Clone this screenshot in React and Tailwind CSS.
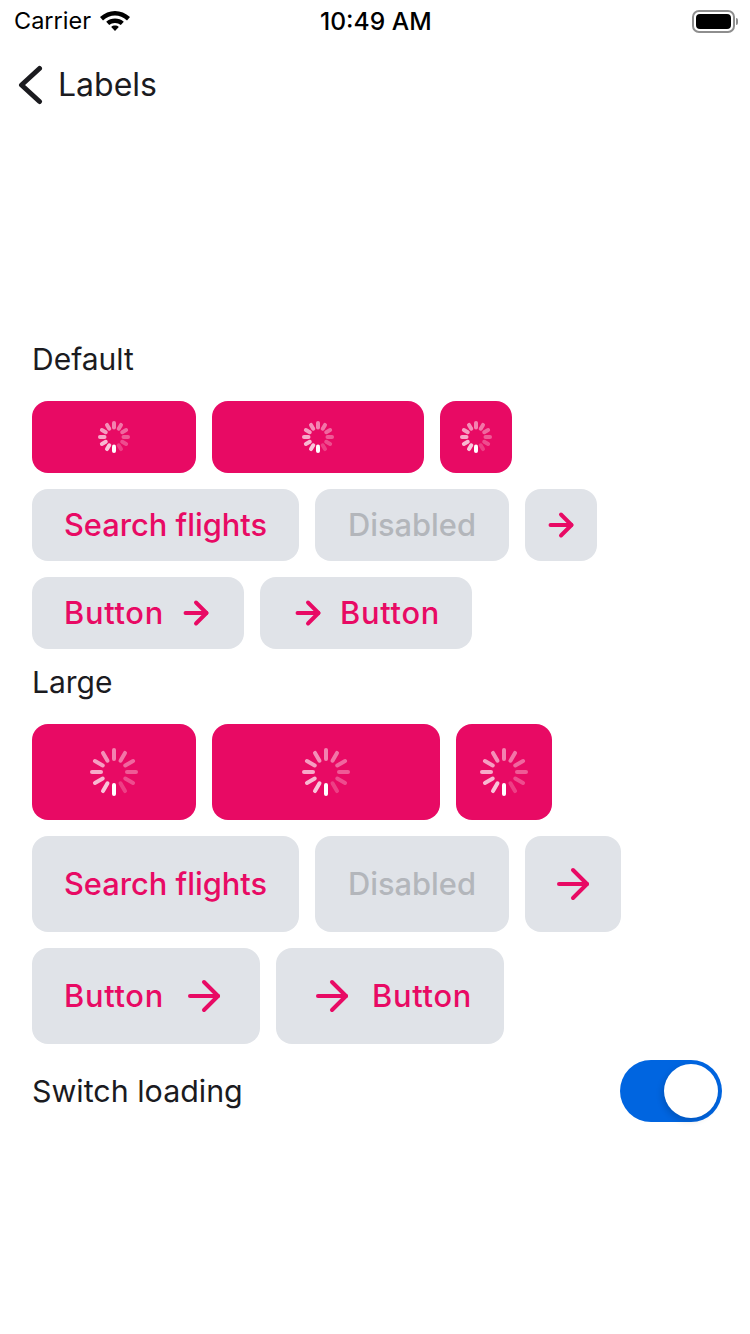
import React from 'react';

const pink = 'text-[#e80a64]';
const font = { fontFamily: 'Inter, "Liberation Sans", sans-serif' };

// 12 ticks, white one at the bottom, fading out going round
const Spinner = ({ size, len, width }) => {
  const ticks = Array.from({ length: 12 }, (_, i) => i);
  const c = size / 2;
  return (
    <svg width={size} height={size} viewBox={`0 0 ${size} ${size}`} className="block">
      {ticks.map(i => (
        <line
          key={i}
          x1={c}
          y1={size - 2}
          x2={c}
          y2={size - len + 2}
          stroke="white"
          strokeWidth={width}
          strokeLinecap="round"
          opacity={i === 0 ? 1 : 0.82 - i * 0.055}
          transform={`rotate(${i * 30} ${c} ${c})`}
        />
      ))}
    </svg>
  );
};

const Arrow = ({ size }) => (
  <svg width={size} height={size} viewBox="0 0 24 24" fill="none" stroke="#e80a64" strokeWidth={size === 36 ? 2.6 : 2} strokeLinecap="round" strokeLinejoin="round" className="block shrink-0">
    <path d="M5 12h14" />
    <path d="M12 5l7 7-7 7" />
  </svg>
);

const LoadingButton = ({ className, size, len, width }) => (
  <div className={`flex items-center justify-center rounded-2xl bg-[#e80a64] ${className}`}>
    <Spinner size={size} len={len} width={width} />
  </div>
);

const GrayButton = ({ className, children }) => (
  <div className={`flex items-center rounded-2xl bg-[#e0e3e8] text-[30.8px] font-medium leading-none ${className}`}>
    {children}
  </div>
);

const Label = () => <span className="tracking-[0.7px]">Button</span>;

const Row = ({ children }) => <div className="flex gap-4 mb-4">{children}</div>;

const Heading = ({ children }) => (
  <div className="h-[34px] mb-[25px] pt-[1px] flex items-center text-[30px] text-[#1b1b1f]">{children}</div>
);

export default function App() {
  return (
    <div className="w-[750px] h-[1334px] bg-white overflow-hidden" style={font}>
      <div className="h-10 relative flex items-center justify-between pl-[14px] pr-[12px] pt-[2px]">
        <div className="flex items-center gap-[9px]">
          <span className="text-[23.5px] text-black">Carrier</span>
          <svg width="30" height="22" viewBox="0 0 30 22" className="block">
            <path d="M15 1C9.500 1 4.500 3 0 7l3 3.400C6.700 7 10.700 5.500 15 5.500s8.300 1.500 12 4.900L30 7C25.500 3 20.500 1 15 1z" fill="black" />
            <path d="M15 8.500c-3.300 0-6.300 1.100-8.800 3.300l3 3.300c1.600-1.400 3.600-2.200 5.800-2.200s4.200.8 5.800 2.200l3-3.300c-2.500-2.200-5.500-3.300-8.800-3.300z" fill="black" />
            <path d="M15 15.500c-1.500 0-2.800.5-3.800 1.400L15 21l3.800-4.100c-1-.9-2.300-1.400-3.800-1.400z" fill="black" />
          </svg>
        </div>
        <span className="absolute left-[320px] text-[24.6px] font-medium text-black">10:49 AM</span>
        <div className="flex items-center gap-[1px]">
          <div className="w-[43px] h-[23px] rounded-[7px] border-2 border-[#8e8e8e] p-[2px]">
            <div className="w-full h-full rounded-[4px] bg-black" />
          </div>
          <div className="w-[2px] h-[7px] rounded-r bg-[#8e8e8e]" />
        </div>
      </div>

      <div className="h-[88px] flex items-center pl-[15px] pt-[1px]">
        <svg width="30" height="40" viewBox="0 0 30 40" fill="none" stroke="#1b1b1f" strokeWidth="5" strokeLinecap="round" strokeLinejoin="round" className="block">
          <path d="M24.500 3.500L6.500 20l18 16.500" />
        </svg>
        <span className="ml-[13px] text-[32px] text-[#1b1b1f]">Labels</span>
      </div>

      <div className="pt-[214px] pl-8 pr-7">
        <Heading>Default</Heading>
        <Row>
          <LoadingButton className="w-[164px] h-[72px]" size={32} len={8.500} width={4} />
          <LoadingButton className="w-[212px] h-[72px]" size={32} len={8.500} width={4} />
          <LoadingButton className="w-[72px] h-[72px]" size={32} len={8.500} width={4} />
        </Row>
        <Row>
          <GrayButton className={`w-[267px] h-[72px] justify-center ${pink}`}>Search flights</GrayButton>
          <GrayButton className="w-[194px] h-[72px] justify-center text-[#b3b6bb]">Disabled</GrayButton>
          <GrayButton className="h-[72px] w-[72px] justify-center"><Arrow size={36} /></GrayButton>
        </Row>
        <Row>
          <GrayButton className={`w-[212px] h-[72px] pl-8 pr-[30px] justify-between ${pink}`}><Label /><Arrow size={36} /></GrayButton>
          <GrayButton className={`w-[212px] h-[72px] pr-8 pl-[30px] justify-between ${pink}`}><Arrow size={36} /><Label /></GrayButton>
        </Row>

        <Heading>Large</Heading>
        <Row>
          <LoadingButton className="w-[164px] h-[96px]" size={48} len={13} width={4} />
          <LoadingButton className="w-[228px] h-[96px]" size={48} len={13} width={4} />
          <LoadingButton className="w-[96px] h-[96px]" size={48} len={13} width={4} />
        </Row>
        <Row>
          <GrayButton className={`w-[267px] h-[96px] justify-center ${pink}`}>Search flights</GrayButton>
          <GrayButton className="w-[194px] h-[96px] justify-center text-[#b3b6bb]">Disabled</GrayButton>
          <GrayButton className="h-[96px] w-[96px] justify-center"><Arrow size={48} /></GrayButton>
        </Row>
        <Row>
          <GrayButton className={`w-[228px] h-[96px] px-8 justify-between ${pink}`}><Label /><Arrow size={48} /></GrayButton>
          <GrayButton className={`w-[228px] h-[96px] px-8 justify-between ${pink}`}><Arrow size={48} /><Label /></GrayButton>
        </Row>

        <div className="flex items-center justify-between h-[62px]">
          <span className="text-[30.400px] pt-[2px] text-[#1b1b1f]">Switch loading</span>
          <div className="w-[102px] h-[62px] rounded-full bg-[#0065e0] flex items-center justify-end pr-1">
            <div className="w-[54px] h-[54px] rounded-full bg-white shadow-[-2px_3px_6px_rgba(0,0,0,0.15)]" />
          </div>
        </div>
      </div>
    </div>
  );
}
